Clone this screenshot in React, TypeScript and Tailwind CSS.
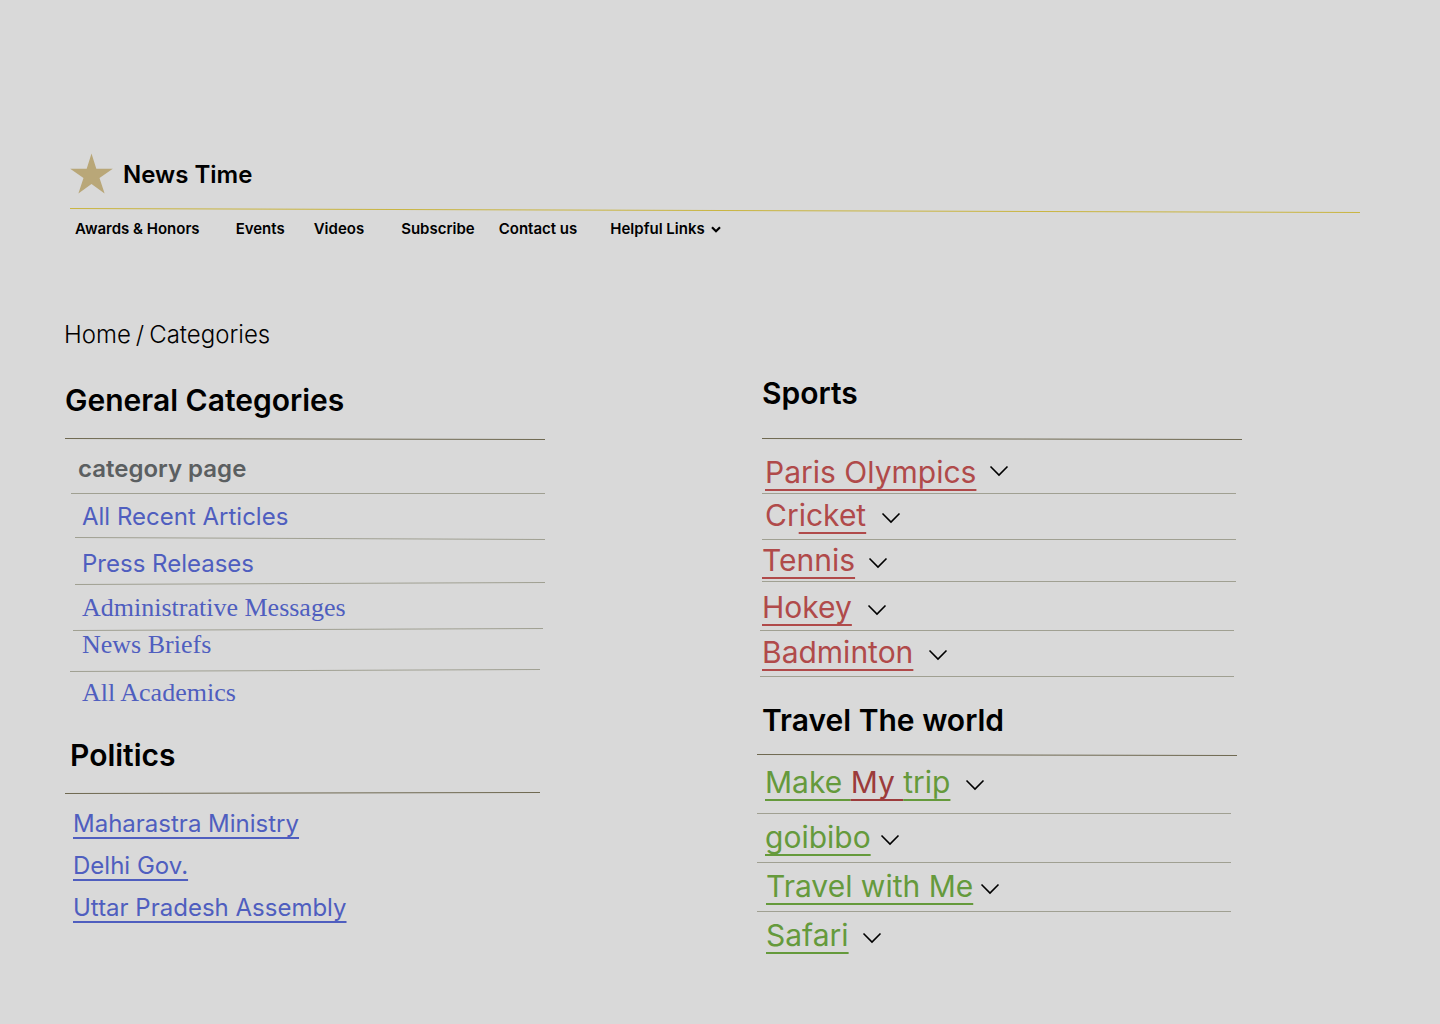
import React from "react";

type RuleProps = { className?: string; from?: number; to?: number };

/* A hairline that may slope by a pixel or two between its ends. */
function Rule({ className = "", from = 2.5, to = 2.5 }: RuleProps) {
  return (
    <div className={className} role="separator">
      <svg className="block h-1 w-full overflow-visible" aria-hidden="true">
        <line x1="0" y1={from} x2="100%" y2={to} stroke="currentColor" strokeWidth="1" />
      </svg>
    </div>
  );
}

function Chevron() {
  return (
    <svg className="block h-[10px] w-[18px] overflow-visible" viewBox="0 0 18 10" fill="none" aria-hidden="true">
      <path d="M0.5 0.5 9 9 17.5 0.5" stroke="#000" strokeWidth="1.6" />
    </svg>
  );
}

type EntryProps = {
  name: string;
  className: string;
  gap: string;
  color: string;
  raised?: boolean;
  children: React.ReactNode;
};

function Entry({ name, className, gap, color, raised, children }: EntryProps) {
  return (
    <div className={`flex items-center pt-[3px] pb-px text-3xl leading-8 ${gap} ${className}`}>
      <a href="#" className={`whitespace-nowrap ${color}`}>
        {children}
      </a>
      <button type="button" aria-label={`Expand ${name}`} className={raised ? "mb-[2px]" : "mt-[6px]"}>
        <Chevron />
      </button>
    </div>
  );
}

const line = "underline decoration-2 underline-offset-[6px] [text-decoration-skip-ink:none]";
const thinLine = "underline decoration-2 underline-offset-[5px] [text-decoration-skip-ink:none]";
const heading = "pt-[3px] pb-px text-3xl leading-9 font-semibold text-black";
const red = "text-[#b04a4a]";
const green = "text-[#659a3c]";
const sans = "block pl-[17px] text-2xl leading-8 text-[#4f5ebf]";
const serif =
  "block pl-[17px] text-[26px] leading-[26px] text-[#4f5ebf] font-['Liberation_Serif',serif]";

export default function App() {
  return (
    <div className="min-h-screen bg-[#d9d9d9] pt-[153px] pb-16 font-['Inter',sans-serif] text-black">
      <header className="pr-20 pl-[70px]">
        <div className="flex h-[42px] items-center gap-[10px]">
          <svg className="h-[42px] w-[43px]" viewBox="0 0 43 42" aria-hidden="true">
            <path
              d="M21.5 0.5 26.3 15.7H42.8L29.5 25.1 34.6 40.6 21.5 31 8.4 40.6 13.5 25.1 0.2 15.7H16.7Z"
              fill="#b9a778"
            />
          </svg>
          <span className="pt-[2px] text-2xl leading-8 font-semibold">News Time</span>
        </div>
        <Rule className="mt-3 text-[#c9b542]" from={1.5} to={5.5} />
        <nav className="mt-[6px] flex pl-[5px] text-[15px] leading-6 font-semibold whitespace-nowrap">
          <a href="#" className="mr-9">Awards &amp; Honors</a>
          <a href="#" className="mr-[29px]">Events</a>
          <a href="#" className="mr-[37px]">Videos</a>
          <a href="#" className="mr-6">Subscribe</a>
          <a href="#" className="mr-[33px]">Contact us</a>
          <button type="button" className="flex items-center gap-[6px]">
            Helpful Links
            <svg className="h-[7px] w-[10px]" viewBox="0 0 10 7" fill="none" aria-hidden="true">
              <path d="M1 1.2 5 5.2 9 1.2" stroke="#000" strokeWidth="2.2" />
            </svg>
          </button>
        </nav>
      </header>

      <nav aria-label="Breadcrumb" className="mt-[78px] flex gap-[5px] pl-16 text-2xl leading-8 font-light">
        <a href="#">Home</a>
        <span>/</span>
        <span>Categories</span>
      </nav>

      <main className="mt-[21px] grid grid-cols-2 gap-[89px] pr-20 pl-[65px]">
        <div className="max-w-[480px] pt-[7px] text-[#a0a092]">
          <section>
            <h2 className={heading}>General Categories</h2>
            <Rule className="mt-[17px] text-[#6f6951]" from={2.5} to={3.5} />
            <h3 className="mt-[13px] pl-[13px] text-2xl leading-8 font-semibold text-[#5b5f61]">
              category page
            </h3>
            <Rule className="mt-[6px] pl-[6px]" />
            <a href="#" className={`mt-[6px] ${sans}`}>
              All Recent Articles
            </a>
            <Rule className="mt-[3px] pl-[10px]" from={1.5} to={3.5} />
            <a href="#" className={`mt-2 ${sans}`}>
              Press Releases
            </a>
            <Rule className="mt-px pl-[10px]" from={3.5} to={1.5} />
            <a href="#" className={`mt-[10px] ${serif}`}>
              Administrative Messages
            </a>
            <Rule className="mt-[6px] pr-[2px] pl-2" from={3.5} to={1.5} />
            <a href="#" className={`mt-px ${serif}`}>
              News Briefs
            </a>
            <Rule className="mt-[10px] pr-[5px] pl-[5px]" from={3.5} to={1.5} />
            <a href="#" className={`mt-2 ${serif}`}>
              All Academics
            </a>
          </section>

          <section className="mt-7">
            <h2 className={`pl-[5px] ${heading}`}>Politics</h2>
            <Rule className="mt-4 pr-[5px] text-[#6f6951]" from={3.5} to={2.5} />
            <div className="mt-[14px] flex flex-col items-start gap-[10px] pl-2 text-2xl leading-8 text-[#4f5ebf]">
              <a href="#" className={thinLine}>Maharastra Ministry</a>
              <a href="#" className={thinLine}>Delhi Gov.</a>
              <a href="#" className={thinLine}>Uttar Pradesh Assembly</a>
            </div>
          </section>
        </div>

        <div className="max-w-[485px] text-[#a0a092]">
          <section>
            <h2 className={`pl-[5px] ${heading}`}>Sports</h2>
            <Rule className="mt-6 pl-[5px] text-[#6f6951]" from={2.5} to={3.5} />
            <Entry name="Paris Olympics" className="mt-[13px] pl-2" gap="gap-[14px]" color={red} raised>
              <span className={line}>Paris Olympics</span>
            </Entry>
            <Rule className="mt-[2px] pr-[6px] pl-[5px]" />
            <Entry name="Cricket" className="mt-px pl-2" gap="gap-4" color={red}>
              Cr<span className={line}>icket</span>
            </Entry>
            <Rule className="mt-[5px] pr-[6px] pl-[5px]" />
            <Entry name="Tennis" className="pl-[5px]" gap="gap-[14px]" color={red}>
              <span className={line}>Tennis</span>
            </Entry>
            <Rule className="mt-[2px] pr-[6px] pl-[5px]" />
            <Entry name="Hokey" className="mt-[5px] pl-[5px]" gap="gap-4" color={red}>
              <span className={line}>Hokey</span>
            </Entry>
            <Rule className="mt-1 pr-2 pl-[3px]" />
            <Entry name="Badminton" className="mt-px pl-[5px]" gap="gap-4" color={red}>
              <span className={line}>Badminton</span>
            </Entry>
            <Rule className="mt-[5px] pr-2 pl-[3px]" />
          </section>

          <section className="mt-[21px]">
            <h2 className={`pl-[5px] ${heading}`}>Travel The world</h2>
            <Rule className="mt-[13px] pr-[5px] text-[#6f6951]" from={2.5} to={3.5} />
            <Entry name="Make My trip" className="mt-[7px] pl-2" gap="gap-4" color={green}>
              <span className={line}>Make </span>
              <span className={`text-[#9c3b3b] ${line}`}>My </span>
              <span className={line}>trip</span>
            </Entry>
            <Rule className="mt-3 pr-[11px]" />
            <Entry name="goibibo" className="mt-[3px] pl-2" gap="gap-[10px]" color={green}>
              <span className={line}>goibibo</span>
            </Entry>
            <Rule className="mt-[6px] pr-[11px]" />
            <Entry name="Travel with Me" className="mt-[3px] pl-[9px]" gap="gap-2" color={green}>
              <span className={line}>Travel with Me</span>
            </Entry>
            <Rule className="mt-[6px] pr-[11px]" />
            <Entry name="Safari" className="mt-[3px] pl-[9px]" gap="gap-[14px]" color={green}>
              <span className={line}>Safari</span>
            </Entry>
          </section>
        </div>
      </main>
    </div>
  );
}
